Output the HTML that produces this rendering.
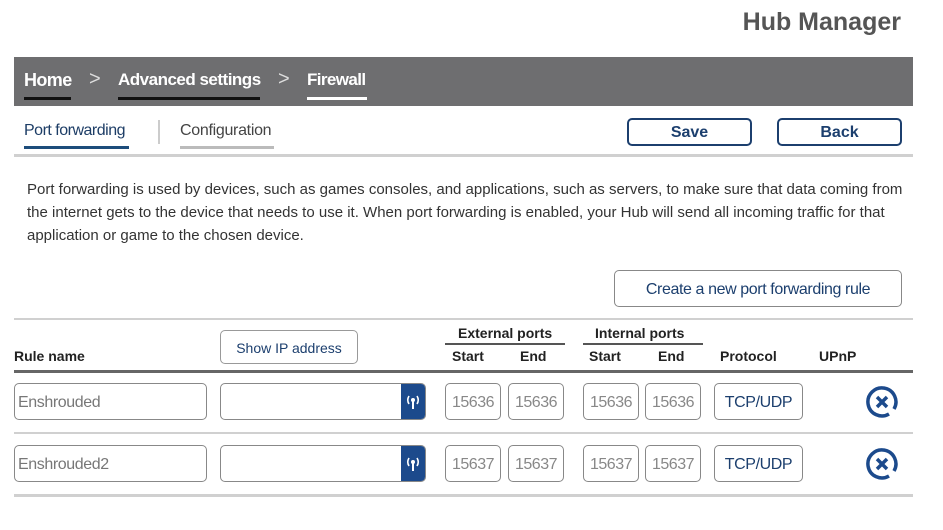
<!DOCTYPE html>
<html><head><style>
body{margin:0;width:943px;height:530px;background:#fff;position:relative;font-family:"Liberation Sans",sans-serif;overflow:hidden}
.a{position:absolute}
.t{position:absolute;white-space:nowrap}
.in{position:absolute;box-sizing:border-box;border:1px solid #888;border-radius:5px;background:#fff;color:#888;font-size:16px;line-height:37px;height:37px}
.hd{position:absolute;font-weight:bold;font-size:14px;color:#222;white-space:nowrap}
.bc{position:absolute;white-space:nowrap;color:#fff;font-size:18px;font-weight:bold;letter-spacing:-0.6px}
</style></head><body>
<div class="t" style="right:42px;top:8px;font-size:25px;font-weight:bold;color:#555">Hub Manager</div>
<div class="a" style="left:14px;top:57px;width:899px;height:49px;background:#6e6e70"></div>
<div class="bc" style="left:24px;top:70px">Home</div>
<div class="t" style="left:89px;top:68px;color:#ddd;font-size:20px">&gt;</div>
<div class="bc" style="left:118px;top:70px;font-size:17px;letter-spacing:-0.5px">Advanced settings</div>
<div class="t" style="left:278px;top:68px;color:#ddd;font-size:20px">&gt;</div>
<div class="bc" style="left:307px;top:70px;font-size:17px">Firewall</div>
<div class="a" style="left:24px;top:97px;width:47px;height:3px;background:#111"></div>
<div class="a" style="left:118px;top:97px;width:142px;height:3px;background:#111"></div>
<div class="a" style="left:307px;top:97px;width:60px;height:3px;background:#fff"></div>
<div class="t" style="left:24px;top:122px;font-size:16px;color:#1d3d66;letter-spacing:-0.5px">Port forwarding</div>
<div class="a" style="left:24px;top:146px;width:105px;height:3px;background:#1d4d7b"></div>
<div class="a" style="left:158px;top:120px;width:2px;height:24px;background:#ccc"></div>
<div class="t" style="left:180px;top:122px;font-size:16px;color:#444;letter-spacing:-0.3px">Configuration</div>
<div class="a" style="left:180px;top:146px;width:94px;height:3px;background:#bbb"></div>
<div class="a" style="left:14px;top:154px;width:899px;height:3px;background:#d0d0d0"></div>
<div class="a" style="left:627px;top:118px;width:125px;height:28px;box-sizing:border-box;border:2px solid #1c3f6e;border-radius:5px;text-align:center;line-height:26px;font-weight:bold;font-size:16px;color:#1c3f6e">Save</div>
<div class="a" style="left:777px;top:118px;width:125px;height:28px;box-sizing:border-box;border:2px solid #1c3f6e;border-radius:5px;text-align:center;line-height:26px;font-weight:bold;font-size:16px;color:#1c3f6e">Back</div>
<div class="a" style="left:27px;top:178px;width:890px;font-size:15px;line-height:23px;color:#333">Port forwarding is used by devices, such as games consoles, and applications, such as servers, to make sure that data coming from the internet gets to the device that needs to use it. When port forwarding is enabled, your Hub will send all incoming traffic for that application or game to the chosen device.</div>
<div class="a" style="left:614px;top:270px;width:288px;height:37px;box-sizing:border-box;border:1px solid #888;border-radius:5px;text-align:center;line-height:38px;font-size:16px;color:#1c3f6e;letter-spacing:-0.4px">Create a new port forwarding rule</div>
<div class="a" style="left:14px;top:318px;width:899px;height:2px;background:#d0d0d0"></div>
<div class="hd" style="left:14px;top:348px">Rule name</div>
<div class="a" style="left:220px;top:330px;width:138px;height:34px;box-sizing:border-box;border:1px solid #999;border-radius:5px;text-align:center;line-height:34px;font-size:14px;color:#1c3f6e">Show IP address</div>
<div class="hd" style="left:458px;top:325px">External ports</div>
<div class="a" style="left:445px;top:343px;width:120px;height:2px;background:#555"></div>
<div class="hd" style="left:452px;top:348px">Start</div>
<div class="hd" style="left:520px;top:348px">End</div>
<div class="hd" style="left:595px;top:325px">Internal ports</div>
<div class="a" style="left:583px;top:343px;width:120px;height:2px;background:#555"></div>
<div class="hd" style="left:589px;top:348px">Start</div>
<div class="hd" style="left:658px;top:348px">End</div>
<div class="hd" style="left:720px;top:348px">Protocol</div>
<div class="hd" style="left:819px;top:348px">UPnP</div>
<div class="a" style="left:14px;top:370px;width:899px;height:3px;background:#666"></div>

<div class="a" style="left:0;top:383px;width:943px;height:60px">
<div class="in" style="left:14px;top:0;width:193px;padding-left:3px;color:#777;letter-spacing:-0.4px">Enshrouded</div>
<div class="in" style="left:220px;top:0;width:206px;overflow:hidden"><svg class="a" style="right:0;top:0" width="24" height="37" viewBox="0 0 24 37"><rect width="24" height="37" fill="#1c4a8c"/><circle cx="12" cy="16" r="2" fill="#fff"/><path d="M12 17 V25" stroke="#fff" stroke-width="2"/><path d="M8 12 Q5.5 16 8 20 M16 12 Q18.5 16 16 20" stroke="#fff" stroke-width="1.6" fill="none"/></svg></div>
<div class="in" style="left:445px;top:0;width:56px;text-align:center;letter-spacing:-0.5px">15636</div>
<div class="in" style="left:508px;top:0;width:56px;text-align:center;letter-spacing:-0.5px">15636</div>
<div class="in" style="left:583px;top:0;width:56px;text-align:center;letter-spacing:-0.5px">15636</div>
<div class="in" style="left:645px;top:0;width:56px;text-align:center;letter-spacing:-0.5px">15636</div>
<div class="in" style="left:714px;top:0;width:89px;text-align:center;color:#1c3f6e;font-size:16px;letter-spacing:-0.4px">TCP/UDP</div>
<svg class="a" style="left:864px;top:1px" width="36" height="36" viewBox="0 0 36 36"><path d="M30 25 A14 14 0 1 0 25 30" fill="none" stroke="#1c4a8c" stroke-width="3.5"/><path d="M13 13 L23 23 M23 13 L13 23" stroke="#1c4a8c" stroke-width="3.5"/></svg>
</div>
<div class="a" style="left:14px;top:432px;width:899px;height:2px;background:#d0d0d0"></div>

<div class="a" style="left:0;top:445px;width:943px;height:40px">
<div class="in" style="left:14px;top:0;width:193px;padding-left:3px;color:#777;letter-spacing:-0.4px">Enshrouded2</div>
<div class="in" style="left:220px;top:0;width:206px;overflow:hidden"><svg class="a" style="right:0;top:0" width="24" height="37" viewBox="0 0 24 37"><rect width="24" height="37" fill="#1c4a8c"/><circle cx="12" cy="16" r="2" fill="#fff"/><path d="M12 17 V25" stroke="#fff" stroke-width="2"/><path d="M8 12 Q5.5 16 8 20 M16 12 Q18.5 16 16 20" stroke="#fff" stroke-width="1.6" fill="none"/></svg></div>
<div class="in" style="left:445px;top:0;width:56px;text-align:center;letter-spacing:-0.5px">15637</div>
<div class="in" style="left:508px;top:0;width:56px;text-align:center;letter-spacing:-0.5px">15637</div>
<div class="in" style="left:583px;top:0;width:56px;text-align:center;letter-spacing:-0.5px">15637</div>
<div class="in" style="left:645px;top:0;width:56px;text-align:center;letter-spacing:-0.5px">15637</div>
<div class="in" style="left:714px;top:0;width:89px;text-align:center;color:#1c3f6e;font-size:16px;letter-spacing:-0.4px">TCP/UDP</div>
<svg class="a" style="left:864px;top:1px" width="36" height="36" viewBox="0 0 36 36"><path d="M30 25 A14 14 0 1 0 25 30" fill="none" stroke="#1c4a8c" stroke-width="3.5"/><path d="M13 13 L23 23 M23 13 L13 23" stroke="#1c4a8c" stroke-width="3.5"/></svg>
</div>
<div class="a" style="left:14px;top:494px;width:899px;height:3px;background:#d0d0d0"></div>
</body></html>
